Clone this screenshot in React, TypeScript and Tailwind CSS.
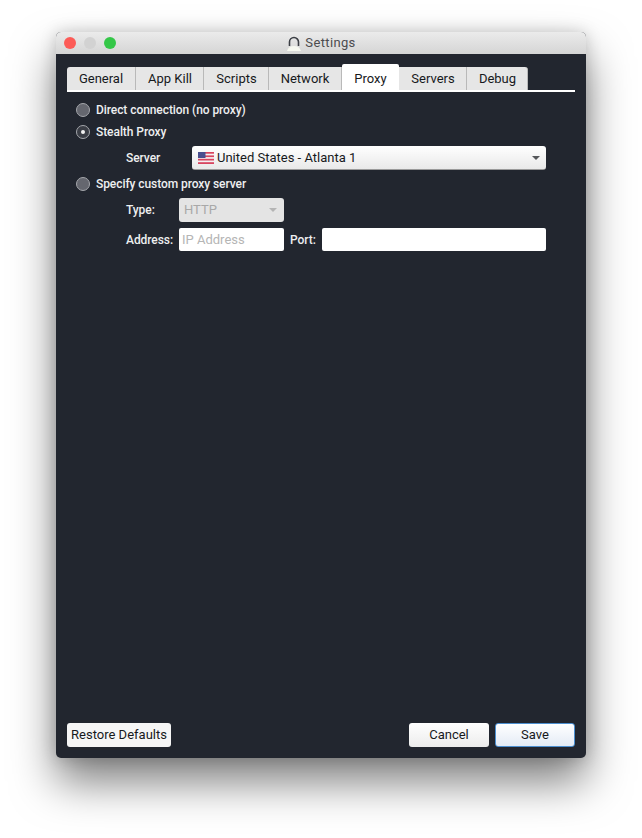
const tabs = [
  { label: 'General', width: 'w-[69px]', pad: 'pl-[0px]' },
  { label: 'App Kill', width: 'w-[68px]', pad: 'pl-[1px]' },
  { label: 'Scripts', width: 'w-[65px]', pad: 'pl-[1px]' },
  { label: 'Network', width: 'w-[73px]', pad: 'pl-[0px]' },
  { label: 'Proxy', width: 'w-[57px]', pad: 'pl-[0px]', active: true },
  { label: 'Servers', width: 'w-[68px]', pad: 'pl-[1px]' },
  { label: 'Debug', width: 'w-[61px]', pad: 'pl-[1px]' },
];

const labelText = 'text-[12px] font-medium tracking-[-0.07px] text-[#eeeff0]';

const Radio = ({ checked }: { checked?: boolean }) => (
  <span
    className={`flex h-[14px] w-[14px] shrink-0 items-center justify-center rounded-full border border-[#a4a6ab] ${
      checked ? 'bg-[#3a3d45]' : 'bg-[#65676f]'
    }`}
  >
    {checked && <span className="h-[4px] w-[4px] rounded-full bg-[#f2f2f2]" />}
  </span>
);

const RadioRow = ({ label, checked, className }: { label: string; checked?: boolean; className?: string }) => (
  <div className={`flex h-[16px] items-center gap-[6px] pl-[9px] ${className ?? ''}`}>
    <Radio checked={checked} />
    <span className={labelText}>{label}</span>
  </div>
);

const Caret = ({ color }: { color: string }) => (
  <svg width="8" height="4" viewBox="0 0 8 4" className="shrink-0">
    <path d="M0 0h8L4 4z" fill={color} />
  </svg>
);

const Flag = () => (
  <svg width="16" height="12" viewBox="0 0 16 12" className="shrink-0">
    <rect width="16" height="12" fill="#f4f0f2" />
    <rect y="0" width="16" height="1.7" fill="#d8455f" />
    <rect y="3.4" width="16" height="1.7" fill="#d8455f" />
    <rect y="6.8" width="16" height="1.7" fill="#d8455f" />
    <rect y="10.2" width="16" height="1.8" fill="#d8455f" />
    <rect width="7.5" height="6" fill="#4a4f8f" />
  </svg>
);

const Headset = () => (
  <svg width="16" height="16" viewBox="0 0 16 16" className="shrink-0">
    <path d="M3.5 11V7a4.5 4.5 0 0 1 9 0v4" fill="none" stroke="#3c3f45" strokeWidth="1.6" />
    <path d="M1 16c1-3.500 3.500-5 7-5s6 1.500 7 5z" fill="#f6f8f0" />
  </svg>
);

const Button = ({ children, className }: { children: string; className?: string }) => (
  <button
    className={`flex h-[24px] items-center justify-center rounded-[3px] text-[13px] text-[#17191c] ${className ?? ''}`}
  >
    {children}
  </button>
);

export default function App() {
  return (
    <div className="h-[838px] w-[642px] bg-white pl-[56px] pt-[32px] font-['Roboto',sans-serif]">
      <div className="flex h-[726px] w-[530px] flex-col overflow-hidden rounded-[5px] bg-[#22262f] shadow-[0_24px_44px_rgba(0,0,0,0.5),0_0_16px_rgba(0,0,0,0.18)]">
        <header className="relative flex h-[22px] shrink-0 items-center justify-center gap-[3px] bg-gradient-to-b from-[#ebebeb] to-[#d5d5d5]">
          <div className="absolute left-[8px] top-[5px] flex gap-[8px]">
            <span className="h-[12px] w-[12px] rounded-full bg-[#fc5b57]" />
            <span className="h-[12px] w-[12px] rounded-full bg-[#d2d2d2]" />
            <span className="h-[12px] w-[12px] rounded-full bg-[#34c748]" />
          </div>
          <Headset />
          <span className="text-[13px] tracking-[0.35px] text-[#4c4c4f]">Settings</span>
        </header>

        <main className="flex flex-1 flex-col px-[11px]">
          <div className="mt-[11px] flex h-[27px] items-end border-b-2 border-white">
            {tabs.map((tab) => (
              <div
                key={tab.label}
                className={`flex items-center justify-center pt-[1px] text-[13px] text-[#17191c] ${tab.width} ${tab.pad} ${
                  tab.active
                    ? 'mb-[-2px] h-[28px] rounded-t-[2px] bg-white'
                    : 'h-[23px] border-r border-[#b9b9b9] bg-[#e6e6e6] first:rounded-tl-[3px] last:rounded-tr-[3px]'
                }`}
              >
                {tab.label}
              </div>
            ))}
          </div>

          <RadioRow label="Direct connection (no proxy)" className="mt-[10px]" />
          <RadioRow label="Stealth Proxy" checked className="mt-[6px]" />

          <div className="mt-[6px] flex h-[24px] items-center pl-[59px]">
            <span className={`w-[66px] ${labelText}`}>Server</span>
            <div className="flex h-[24px] w-[354px] items-center rounded-[3px] border-b border-[#9a9a9a] bg-gradient-to-b from-white to-[#e9e9e9] pl-[6px] pr-[6px]">
              <Flag />
              <span className="ml-[3px] flex-1 text-[13px] text-[#17191c]">United States - Atlanta 1</span>
              <Caret color="#55575a" />
            </div>
          </div>

          <RadioRow label="Specify custom proxy server" className="mt-[6px]" />

          <div className="mt-[6px] flex h-[24px] items-center pl-[59px]">
            <span className={`w-[53px] ${labelText}`}>Type:</span>
            <div className="flex h-[24px] w-[105px] items-center justify-between rounded-[3px] bg-[#e4e4e4] pl-[5px] pr-[7px]">
              <span className="text-[13px] text-[#a8a8a8]">HTTP</span>
              <Caret color="#b4b4b4" />
            </div>
          </div>

          <div className="mt-[6px] flex h-[23px] items-center pl-[59px]">
            <span className={`w-[53px] ${labelText}`}>Address:</span>
            <div className="flex h-[23px] w-[105px] items-center rounded-[2px] bg-white pl-[3px] text-[13px] text-[#b5b5b5]">
              IP Address
            </div>
            <span className={`ml-[6px] w-[32px] ${labelText}`}>Port:</span>
            <div className="h-[23px] w-[224px] rounded-[2px] bg-white" />
          </div>

          <footer className="mt-auto mb-[11px] flex items-center">
            <Button className="w-[104px] bg-[#f6f6f6]">Restore Defaults</Button>
            <Button className="ml-auto w-[80px] bg-gradient-to-b from-white to-[#ececec]">Cancel</Button>
            <Button className="ml-[6px] w-[80px] border border-[#4c8fd0] bg-gradient-to-b from-white to-[#e4ebf5]">
              Save
            </Button>
          </footer>
        </main>
      </div>
    </div>
  );
}
